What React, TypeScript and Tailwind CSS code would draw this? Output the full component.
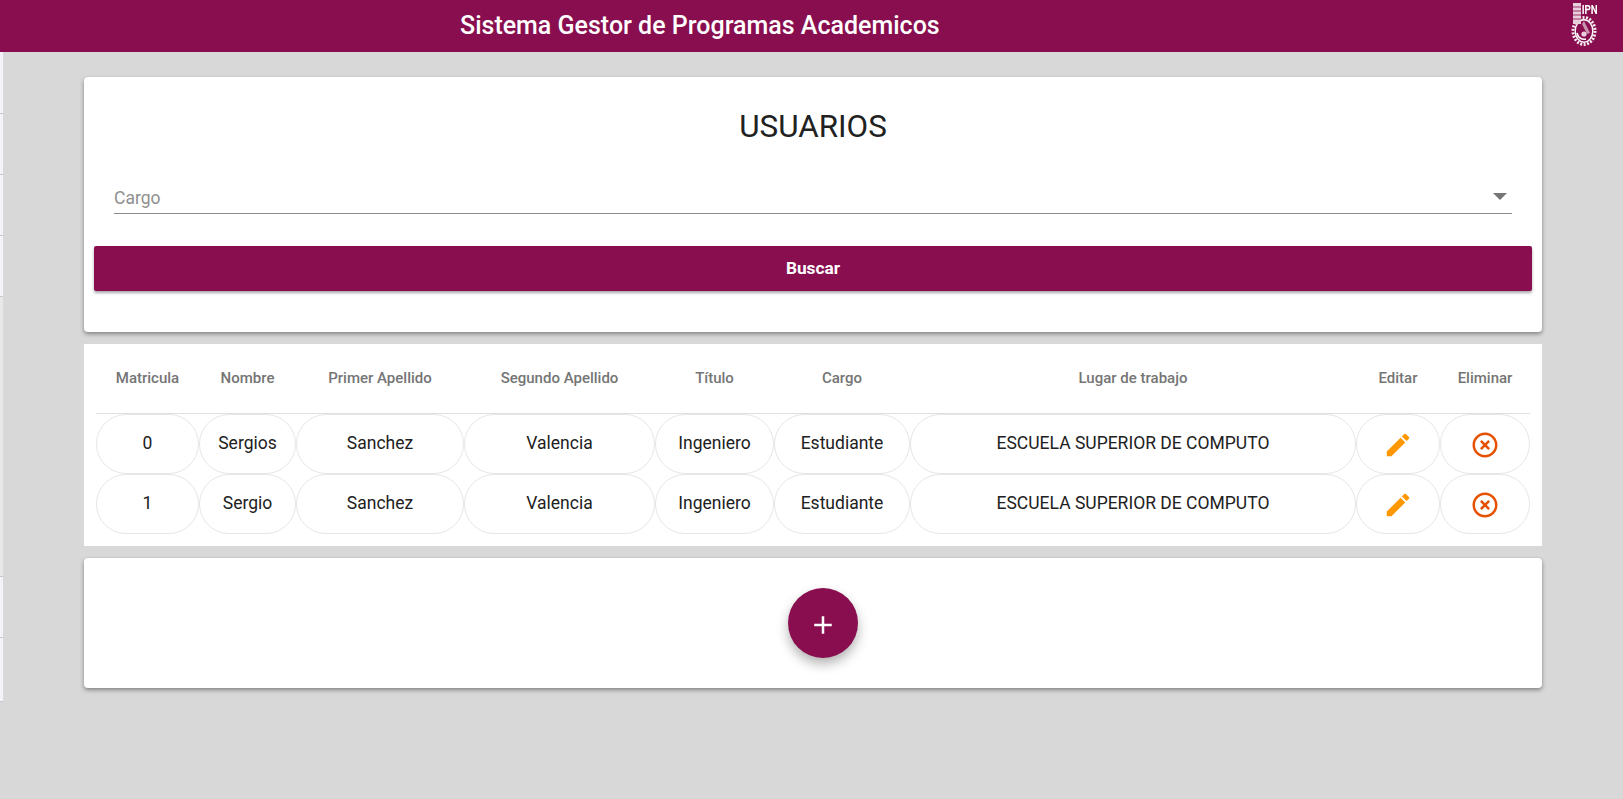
import type { ReactNode } from 'react'

const headers = [
    'Matricula',
    'Nombre',
    'Primer Apellido',
    'Segundo Apellido',
    'Título',
    'Cargo',
    'Lugar de trabajo',
    'Editar',
    'Eliminar'
]

const users = [
    { id: 0, name: 'Sergios' },
    { id: 1, name: 'Sergio' }
]

function Cell({ children }: { children: ReactNode }): ReactNode {
    return (
        <td className="h-[60px] border border-[#e6e6e6] rounded-[30px] text-center text-[17.5px] text-[#212121] p-0 pb-[2px]">
            {children}
        </td>
    )
}

function IconCell({ children }: { children: ReactNode }): ReactNode {
    return (
        <td className="h-[60px] border border-[#e6e6e6] rounded-[30px] p-0 pt-[2px]">
            {children}
        </td>
    )
}

function EditIcon(): ReactNode {
    return (
        <svg viewBox="0 0 24 24" className="w-[30px] h-[30px] mx-auto fill-[#ff9800]">
            <path d="M3 17.25V21h3.75L17.81 9.94l-3.75-3.75L3 17.25zM20.71 7.04a1 1 0 0 0 0-1.41l-2.34-2.34a1 1 0 0 0-1.41 0l-1.83 1.83 3.75 3.75 1.83-1.83z" />
        </svg>
    )
}

function DeleteIcon(): ReactNode {
    return (
        <svg viewBox="0 0 24 24" className="w-[30px] h-[30px] mx-auto fill-[#e65100]">
            <path d="M14.59 8 12 10.59 9.41 8 8 9.41 10.59 12 8 14.59 9.41 16 12 13.41 14.59 16 16 14.59 13.41 12 16 9.41 14.59 8zM12 2C6.47 2 2 6.47 2 12s4.47 10 10 10 10-4.47 10-10S17.53 2 12 2zm0 18c-4.41 0-8-3.59-8-8s3.59-8 8-8 8 3.59 8 8-3.59 8-8 8z" />
        </svg>
    )
}

function Logo(): ReactNode {
    return (
        <div className="relative self-start mt-[2px] w-[26px] h-[44px] blur-[0.4px]">
            <span className="absolute top-[1px] left-[8px] text-[13px] leading-none font-bold text-white scale-x-75">
                IPN
            </span>
            <svg viewBox="0 0 26 44" className="w-full h-full">
                {/* gear */}
                <ellipse cx="13" cy="29" rx="11" ry="13.5" fill="none" stroke="#f7e9f0" strokeWidth="3" strokeDasharray="2 1.5" />
                <ellipse cx="13" cy="29" rx="8.8" ry="11.2" fill="none" stroke="#fff" strokeWidth="1.4" />
                {/* building */}
                <path d="M2 1h8v21H2z" fill="#e9cfdc" />
                <path d="M2 5h8M2 9h8M2 13h8M2 17h8" stroke="#880e4f" strokeWidth="0.8" />
                {/* inner shapes */}
                <path d="M13 19l6 12-3 1-5-10z" fill="#c994ad" />
                <path d="M6 31c1 5 5 7 9 6" fill="none" stroke="#fff" strokeWidth="1.6" />
                <circle cx="13" cy="32" r="2.6" fill="#e9cfdc" />
            </svg>
        </div>
    )
}

function SideStrip(): ReactNode {
    return (
        <div className="w-[3px] shrink-0 flex flex-col">
            <div className="h-[62px] bg-[#f3f3fa] border-b border-[#c8c8c8]" />
            <div className="h-[61px] bg-[#f3f3fa] border-b border-[#c8c8c8]" />
            <div className="h-[61px] bg-[#f3f3fa] border-b border-[#c8c8c8]" />
            <div className="h-[61px] bg-[#f3f3fa] border-b border-[#c8c8c8]" />
            <div className="h-[280px] bg-[#e8e8e8] border-b border-[#c8c8c8]" />
            <div className="h-[61px] bg-[#f3f3fa] border-b border-[#c8c8c8]" />
            <div className="h-[64px] bg-[#f3f3fa] border-b border-[#c8c8c8]" />
        </div>
    )
}

export default function App(): ReactNode {
    return (
        <div className="h-[799px] overflow-hidden bg-[#d8d8d8] font-['Roboto',sans-serif]">
            <header className="h-[52px] bg-[#880e4f] flex items-center justify-between pl-[460px] pr-[26px]">
                <h1 className="text-[25px] font-medium text-white">
                    Sistema Gestor de Programas Academicos
                </h1>
                <Logo />
            </header>
            <div className="flex">
                <SideStrip />
                <main className="flex-1 px-[81px] pt-[25px] flex flex-col gap-3">
                    <section className="h-[255px] bg-white rounded-[4px] shadow-[0_2px_4px_rgba(0,0,0,0.4)] px-[10px] pt-[32px]">
                        <h2 className="text-[31.4px] leading-[36px] text-center text-[#212121]">
                            USUARIOS
                        </h2>
                        <div className="mx-5 mt-[25px] h-[44px] border-b border-[#8c8c8c] flex items-end justify-between pb-[2px]">
                            <span className="text-[17.5px] leading-[26px] text-[#8f8f8f]">
                                Cargo
                            </span>
                            <span className="mb-[11px] mr-[5px] w-0 h-0 border-x-[7px] border-x-transparent border-t-[7px] border-t-[#757575]" />
                        </div>
                        <button className="mt-[32px] w-full h-[45px] bg-[#880e4f] rounded-[2px] text-white font-bold text-[17.3px] shadow-[0_2px_3px_rgba(0,0,0,0.35)]">
                            Buscar
                        </button>
                    </section>
                    <section className="h-[202px] bg-white px-3">
                        <table className="w-[1434px] table-fixed border-separate border-spacing-0">
                            <colgroup>
                                <col className="w-[103px]" />
                                <col className="w-[97px]" />
                                <col className="w-[168px]" />
                                <col className="w-[191px]" />
                                <col className="w-[119px]" />
                                <col className="w-[136px]" />
                                <col className="w-[446px]" />
                                <col className="w-[84px]" />
                                <col className="w-[90px]" />
                            </colgroup>
                            <thead>
                                <tr>
                                    {headers.map((header) => (
                                        <th
                                            key={header}
                                            className="h-[70px] border-b border-[#e0e0e0] text-[15px] font-medium text-[#757575] text-center p-0"
                                        >
                                            {header}
                                        </th>
                                    ))}
                                </tr>
                            </thead>
                            <tbody>
                                {users.map((user) => (
                                    <tr key={user.id}>
                                        <Cell>{user.id}</Cell>
                                        <Cell>{user.name}</Cell>
                                        <Cell>Sanchez</Cell>
                                        <Cell>Valencia</Cell>
                                        <Cell>Ingeniero</Cell>
                                        <Cell>Estudiante</Cell>
                                        <Cell>ESCUELA SUPERIOR DE COMPUTO</Cell>
                                        <IconCell>
                                            <EditIcon />
                                        </IconCell>
                                        <IconCell>
                                            <DeleteIcon />
                                        </IconCell>
                                    </tr>
                                ))}
                            </tbody>
                        </table>
                    </section>
                    <section className="h-[130px] bg-white rounded-[4px] shadow-[0_2px_4px_rgba(0,0,0,0.4)] flex items-center justify-center">
                        <button
                            className="ml-[20px] w-[70px] h-[70px] rounded-full bg-[#880e4f] flex items-center justify-center shadow-[0_6px_12px_rgba(0,0,0,0.3)]"
                            aria-label="Agregar"
                        >
                            <svg viewBox="0 0 24 24" className="mt-[3px] w-[30px] h-[30px] fill-white">
                                <path d="M19 13h-6v6h-2v-6H5v-2h6V5h2v6h6v2z" />
                            </svg>
                        </button>
                    </section>
                </main>
            </div>
        </div>
    )
}
